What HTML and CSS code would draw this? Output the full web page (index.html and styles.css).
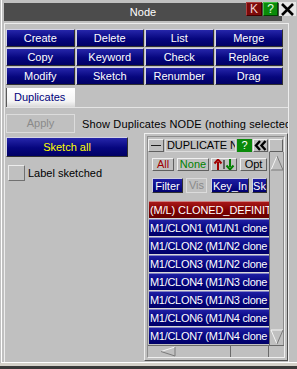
FILE: index.html
```html
<!DOCTYPE html>
<html lang="en">
<head>
    <meta charset="UTF-8">
    <title>Node</title>
    <link rel="stylesheet" href="styles.css">
</head>
<body>
    <div class="window">
        <!-- Title bar -->
        <div class="titlebar">Node</div>
        <div class="title-btns">
            <span class="tb tb-k">K</span>
            <span class="tb tb-help">?</span>
            <span class="tb tb-close">
                <svg width="15" height="13" viewBox="0 0 15 13"><path d="M2 1 L13 12 M13 1 L2 12" stroke="#000" stroke-width="2.6" fill="none"/></svg>
            </span>
        </div>

        <div class="panel">
            <div class="grid">
                <div class="btn-blue">Create</div>
                <div class="btn-blue">Delete</div>
                <div class="btn-blue">List</div>
                <div class="btn-blue">Merge</div>
                <div class="btn-blue">Copy</div>
                <div class="btn-blue">Keyword</div>
                <div class="btn-blue">Check</div>
                <div class="btn-blue">Replace</div>
                <div class="btn-blue">Modify</div>
                <div class="btn-blue">Sketch</div>
                <div class="btn-blue">Renumber</div>
                <div class="btn-blue">Drag</div>
            </div>

            <div class="tabs">
                <div class="tab">Duplicates</div>
            </div>

            <div class="tabpage">
                <div class="apply-row">
                    <div class="btn-apply">Apply</div>
                    <div class="show-text">Show Duplicates NODE (nothing selected)</div>
                </div>

                <div class="lower">
                    <div class="left-col">
                        <div class="btn-blue sketch-all">Sketch all</div>
                        <div class="check-row">
                            <span class="check-box"></span>
                            <span>Label sketched</span>
                        </div>
                    </div>

                    <!-- Duplicate list sub window -->
                    <div class="subwin">
                        <div class="subwin-inner">
                            <div class="sw-head">
                                <span class="gbtn sw-min"><span class="dash"></span></span>
                                <span class="sw-label">DUPLICATE NODE</span>
                                <span class="sw-help">?</span>
                                <span class="gbtn sw-back">
                                    <svg width="13" height="11" viewBox="0 0 13 11"><path d="M6 1 L2 5.5 L6 10 M11.5 1 L7.5 5.5 L11.5 10" stroke="#000" stroke-width="2.4" fill="none"/></svg>
                                </span>
                                <span class="gbtn sw-corner"></span>
                            </div>
                            <div class="sw-body">
                                <div class="sw-main">
                                    <div class="ctrl-row row-a">
                                        <span class="gbtn c-all">All</span>
                                        <span class="gbtn c-none">None</span>
                                        <span class="gbtn c-sort">
                                            <svg width="22" height="11" viewBox="0 0 22 11"><path d="M5 11 V3 M1.5 4.5 L5 0.5 L8.5 4.5" stroke="#a00000" stroke-width="2" fill="none"/><path d="M11 1 V10" stroke="#000" stroke-width="1"/><path d="M17 0 V8 M13.5 6.5 L17 10.5 L20.5 6.5" stroke="#008000" stroke-width="2" fill="none"/></svg>
                                        </span>
                                        <span class="gbtn c-opt">Opt</span>
                                    </div>
                                    <div class="ctrl-row row-b">
                                        <span class="bbtn c-filter">Filter</span>
                                        <span class="gbtn c-vis">Vis</span>
                                        <span class="bbtn c-key">Key_In</span>
                                        <span class="bbtn c-sk">Sk</span>
                                    </div>
                                    <div class="dup-list">
                                        <div class="dup-row dup-head">(M/L) CLONED_DEFINITION</div>
                                        <div class="dup-row">M1/CLON1 (M1/N1 clone</div>
                                        <div class="dup-row">M1/CLON2 (M1/N2 clone</div>
                                        <div class="dup-row">M1/CLON3 (M1/N2 clone</div>
                                        <div class="dup-row">M1/CLON4 (M1/N3 clone</div>
                                        <div class="dup-row">M1/CLON5 (M1/N3 clone</div>
                                        <div class="dup-row">M1/CLON6 (M1/N4 clone</div>
                                        <div class="dup-row">M1/CLON7 (M1/N4 clone</div>
                                    </div>
                                </div>
                                <div class="vscroll">
                                    <svg width="14" height="16" viewBox="0 0 14 16"><path d="M1 15 L7 1" stroke="#f4f4f4" fill="none"/><path d="M7 1 L13 15 L1 15" stroke="#7a7a7a" fill="none"/></svg>
                                    <svg width="14" height="16" viewBox="0 0 14 16"><path d="M13 1 L1 1 L7 15" stroke="#f4f4f4" fill="none"/><path d="M7 15 L13 1" stroke="#7a7a7a" fill="none"/></svg>
                                </div>
                            </div>
                            <div class="hscroll">
                                <div class="hs-track">
                                    <svg width="16" height="11" viewBox="0 0 16 11"><path d="M15 1 L1 5.5" stroke="#f4f4f4" fill="none"/><path d="M1 5.5 L15 10 L15 1" stroke="#7a7a7a" fill="none"/></svg>
                                </div>
                                <div class="hs-mid"></div>
                                <div class="hs-corner"></div>
                            </div>
                        </div>
                    </div>
                </div>
            </div>
        </div>
    </div>
    <div class="win-edge"></div>
    <div class="win-shadow"></div>
</body>
</html>
```

FILE: styles.css
```css
* { margin: 0; padding: 0; box-sizing: border-box; }
body { width: 297px; height: 369px; overflow: hidden; background-color: #c0c0c0; font-family: "Liberation Sans", Arial, sans-serif; font-size: 11px; color: #000; }

/* Window frame */
.window { position: relative; height: 363px; margin-left: 1px; padding-top: 3px; border-left: 1px solid #fff; border-bottom: 1px solid #fff; display: flex; flex-direction: column; }
.win-edge { height: 3px; background-color: #d4d1c9; }
.win-shadow { height: 3px; background-color: #3a3a3a; }

.titlebar { height: 18px; margin: 0 15px 0 2px; background-color: #4c4c4c; color: #fff; text-align: center; line-height: 18px; font-size: 11px; }
.title-btns { position: absolute; top: 2px; right: 1px; display: flex; gap: 1px; }
.tb { height: 14px; display: flex; align-items: center; justify-content: center; font-size: 12px; line-height: 14px; }
.tb-k { width: 16px; background-color: #7c0a0a; color: #f0d0d0; border: 1px solid; border-color: #b04040 #400000 #400000 #b04040; }
.tb-help { width: 15px; background-color: #0a8a0a; color: #e0ffe0; border: 1px solid; border-color: #40c040 #004000 #004000 #40c040; }
.tb-close { width: 17px; background-color: #e6e6e6; }

/* Main panel */
.panel { flex: 1; width: 285px; margin: 2px 0 0 2px; padding: 5px 0 0 1px; border-top: 1px solid #ededed; border-left: 1px solid #ededed; border-right: 1px solid #ededed; display: flex; flex-direction: column; }

.grid { width: 277px; display: grid; grid-template-columns: repeat(4, 1fr); grid-auto-rows: 18px; gap: 1px; }
.btn-blue { border: 1px solid; border-color: #d4d4e4 #303030 #303030 #d4d4e4; background: linear-gradient(#2626aa, #06067e 55%, #000064); color: #fff; text-align: center; line-height: 16px; white-space: nowrap; }

.tabs { margin-top: 3px; display: flex; }
.tab { width: 69px; height: 19px; padding-left: 7px; line-height: 18px; color: #00007a; background: linear-gradient(#ffffff, #f4f4f4 70%, #d8d8d8); border-left: 1px solid #5a5a5a; }

.tabpage { flex: 1; border-top: 1px solid #e4e4e4; display: flex; flex-direction: column; }
.apply-row { margin-top: 6px; height: 19px; display: flex; align-items: center; overflow: hidden; }
.btn-apply { width: 69px; height: 19px; flex-shrink: 0; border: 1px solid #dcdcdc; color: #8a8a8a; text-align: center; line-height: 17px; }
.show-text { margin-left: 7px; white-space: nowrap; letter-spacing: 0.15px; }

.lower { flex: 1; display: flex; }
.left-col { width: 139px; padding-top: 4px; }
.sketch-all { width: 122px; height: 20px; line-height: 18px; color: #ffff00; }
.check-row { margin-top: 8px; padding-left: 2px; display: flex; align-items: center; gap: 3px; }
.check-box { width: 17px; height: 16px; border: 1px solid; border-color: #ececec #707070 #707070 #ececec; }

/* Sub window */
.subwin { width: 145px; height: 228px; padding: 2px; border: 1px solid; border-color: #f0f0f0 #505050 #505050 #f0f0f0; }
.subwin-inner { height: 100%; padding-top: 2px; border: 1px solid; border-color: #8c8c8c #f0f0f0 #f0f0f0 #8c8c8c; display: flex; flex-direction: column; }

.gbtn { display: flex; align-items: center; justify-content: center; background-color: #c0c0c0; border: 1px solid; border-color: #f0f0f0 #606060 #606060 #f0f0f0; line-height: 11px; white-space: nowrap; }
.bbtn { display: flex; align-items: center; justify-content: center; background: linear-gradient(#1e1ea4, #000070); color: #fff; border: 1px solid; border-color: #d0d0e0 #303030 #303030 #d0d0e0; white-space: nowrap; }

.sw-head { height: 13px; display: flex; gap: 1px; }
.sw-min { width: 16px; }
.dash { width: 10px; border-top: 1px solid #202020; }
.sw-label { width: 71px; padding-left: 1px; border: 1px solid #dcdcdc; line-height: 11px; white-space: nowrap; overflow: hidden; letter-spacing: -0.1px; }
.sw-help { width: 15px; background-color: #0a8a0a; color: #fff; text-align: center; line-height: 13px; }
.sw-back { width: 15px; }
.sw-corner { width: 14px; }

.sw-body { height: 193px; display: flex; }
.sw-main { width: 121px; padding: 6px 0 0 4px; }
.ctrl-row { display: flex; }
.row-a { height: 13px; }
.row-b { height: 15px; margin-top: 7px; }
.c-all { width: 22px; color: #a00000; }
.c-none { width: 32px; margin-left: 3px; color: #008000; }
.c-sort { width: 26px; margin-left: 2px; }
.c-opt { width: 27px; margin-left: 3px; }
.c-filter { width: 31px; }
.c-vis { width: 21px; margin-left: 3px; color: #8a8a8a; border-color: #dcdcdc; }
.c-key { width: 38px; margin-left: 4px; }
.c-sk { width: 15px; margin-left: 3px; }

.dup-list { width: 120px; margin: 8px 0 0 -3px; display: flex; flex-direction: column; gap: 1px; background-color: #d8d8d8; }
.dup-row { height: 17px; padding-left: 1px; line-height: 16px; color: #fff; white-space: nowrap; overflow: hidden; letter-spacing: -0.3px; background: linear-gradient(#1e1ea4, #04047c 55%, #000068); border-top: 1px solid #8080c8; }
.dup-head { background: linear-gradient(#a81818, #7c0000 55%, #660000); border-top-color: #d08080; letter-spacing: -0.1px; }

.vscroll { width: 15px; border-left: 1px solid #6a6a6a; border-right: 1px solid #8a8a8a; display: flex; flex-direction: column; justify-content: space-between; padding: 3px 0 0 0; }

.hscroll { height: 12px; display: flex; border-top: 1px solid #6a6a6a; }
.hs-track { width: 83px; padding: 0 0 0 12px; border-right: 1px solid #6a6a6a; }
.hs-mid { width: 38px; border-right: 1px solid #6a6a6a; }
.hs-corner { width: 15px; }
```
